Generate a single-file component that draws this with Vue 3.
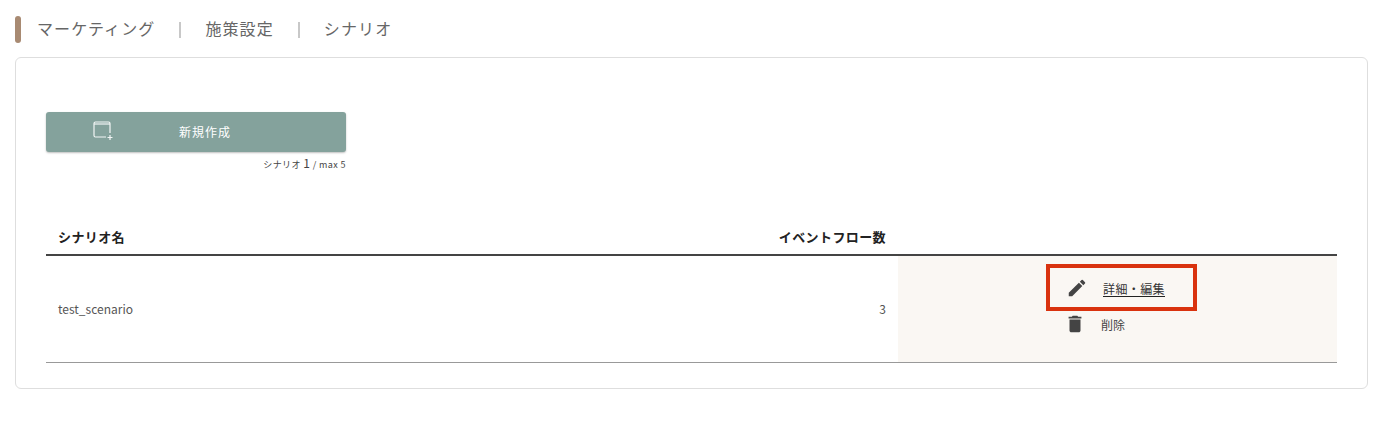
<script setup>
const crumbs = ['マーケティング', '施策設定', 'シナリオ']
const rows = [{ name: 'test_scenario', count: 3 }]
</script>

<template>
  <div class="page">
    <header class="crumbs">
      <span class="accent"></span>
      <template v-for="(c, i) in crumbs" :key="c">
        <span v-if="i" class="sep"></span>
        <span class="crumb">{{ c }}</span>
      </template>
    </header>
    <section class="card">
      <div class="create">
        <button class="btn" type="button">
          <svg class="btn-icon" width="21" height="19" viewBox="0 0 21 19" fill="none" stroke="#fff" stroke-width="1.2" opacity=".9">
            <path d="M13 16H2.500A1.500 1.500 0 0 1 1 14.500V2.500A1.500 1.500 0 0 1 2.500 1h13A1.500 1.500 0 0 1 17 2.500V12" />
            <path d="M1 3h16" />
            <path d="M17 14v5M14.500 16.500h5" />
          </svg>
          <span class="btn-label">新規作成</span>
        </button>
        <p class="quota">シナリオ <b>1</b> / max 5</p>
      </div>
      <div class="table">
        <div class="thead">
          <div class="th-name">シナリオ名</div>
          <div class="th-count">イベントフロー数</div>
          <div class="th-actions"></div>
        </div>
        <div v-for="r in rows" :key="r.name" class="row">
          <div class="td-name">{{ r.name }}</div>
          <div class="td-count">{{ r.count }}</div>
          <div class="td-actions">
            <div class="action-list">
              <a class="action edit">
                <svg viewBox="0 0 24 24" fill="#444"><path d="M3 17.250V21h3.750L17.810 9.940l-3.750-3.750L3 17.250zM20.710 7.040a1 1 0 0 0 0-1.410l-2.340-2.340a1 1 0 0 0-1.410 0l-1.830 1.830 3.750 3.750 1.830-1.830z"/></svg>
                <span class="edit-label">詳細・編集</span>
              </a>
              <a class="action del">
                <svg viewBox="0 0 24 24" fill="#444"><path d="M6 19c0 1.100.9 2 2 2h8c1.100 0 2-.9 2-2V7H6v12zM19 4h-3.500l-1-1h-5l-1 1H5v2h14V4z"/></svg>
                <span class="del-label">削除</span>
              </a>
            </div>
            <span class="highlight"></span>
          </div>
        </div>
      </div>
    </section>
  </div>
</template>

<style>
html, body { margin: 0; background: #fff; }
</style>

<style scoped>
.page {
  width: 1388px;
  height: 429px;
  box-sizing: border-box;
  padding: 16px 20px 0 15px;
  font-family: "Noto Sans CJK JP", "Noto Sans", sans-serif;
  color: #444;
  overflow: hidden;
}
.crumbs {
  display: flex;
  align-items: center;
  height: 27px;
}
.accent {
  width: 6px;
  height: 27px;
  border-radius: 3px;
  background: #a88a72;
  margin-right: 16px;
}
.crumb {
  font-size: 16px;
  letter-spacing: 1.100px;
  color: #666;
  line-height: 25px;
  align-self: flex-start;
}
.sep {
  width: 2px;
  height: 16px;
  background: #c8c8c8;
  margin: 0 24px;
}
.card {
  margin-top: 14px;
  height: 332px;
  box-sizing: border-box;
  border: 1px solid #dedede;
  border-radius: 6px;
  padding: 54px 30px 0;
}
.create {
  width: 300px;
}
.btn {
  position: relative;
  display: flex;
  align-items: center;
  justify-content: center;
  width: 300px;
  height: 40px;
  padding: 0;
  border: 0;
  border-radius: 3px;
  background: #84a29c;
  box-shadow: 0 1px 2px rgba(0, 0, 0, .25);
  color: #fff;
  font: inherit;
}
.btn-icon {
  position: absolute;
  left: 47px;
  top: 9px;
}
.btn-label {
  font-size: 12px;
  letter-spacing: 1px;
  font-weight: 400;
  line-height: 40px;
  margin-left: 18px;
}
.quota {
  margin: 2px 0 0;
  text-align: right;
  font-size: 9px;
  line-height: 18px;
  letter-spacing: .4px;
  color: #444;
}
.quota b {
  font-size: 12px;
  font-weight: 400;
}
.table {
  margin-top: 46px;
  width: 1291px;
}
.thead, .row {
  display: grid;
  grid-template-columns: 340px 512px 439px;
}
.thead {
  height: 36px;
  box-sizing: border-box;
  border-bottom: 2px solid #444;
  font-size: 13px;
  letter-spacing: .4px;
  font-weight: 700;
  line-height: 34px;
  color: #222;
}
.th-name { padding-left: 12px; }
.th-count { text-align: right; padding-right: 12px; }
.row {
  height: 107px;
  box-sizing: border-box;
  border-bottom: 1px solid #999;
  font-size: 12px;
  color: #555;
  grid-template-rows: 106px;
}
.td-name {
  padding-left: 12px;
  line-height: 106px;
}
.td-count {
  text-align: right;
  padding-right: 12px;
  line-height: 106px;
}
.td-actions {
  position: relative;
  background: #faf7f3;
}
.action-list {
  padding: 20px 0 0 170px;
}
.action {
  display: flex;
  align-items: center;
  height: 24px;
}
.del {
  margin-top: 12px;
  margin-left: -4px;
}
.edit {
  margin-left: -2px;
}
.action svg {
  flex: none;
  width: 22px;
  height: 22px;
}
.edit-label {
  margin-left: 15px;
  color: #333;
  text-decoration: underline;
  text-decoration-color: #222;
  text-underline-offset: 2px;
  letter-spacing: .4px;
}
.del-label {
  margin-left: 15px;
  color: #444;
}
.highlight {
  position: absolute;
  left: 148px;
  top: 8px;
  width: 151px;
  height: 47px;
  box-sizing: border-box;
  border: 4px solid #d9320e;
}
</style>
